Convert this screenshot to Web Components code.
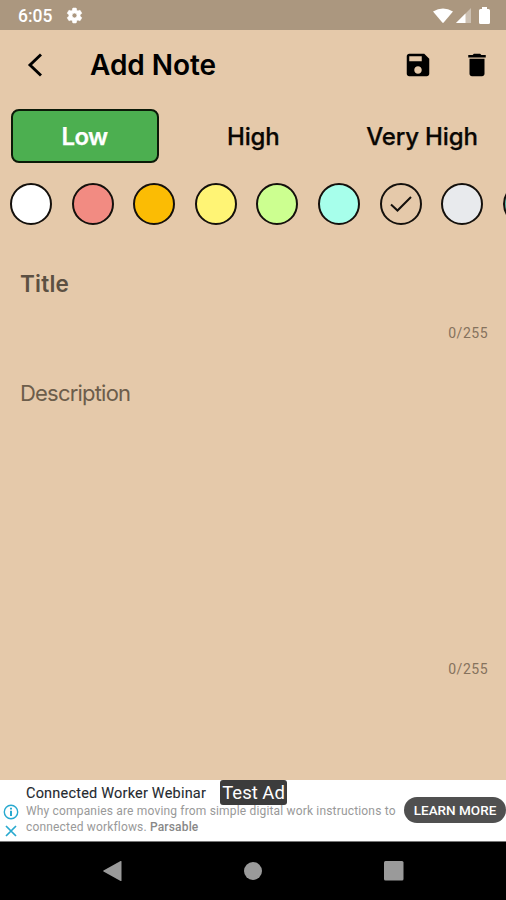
<!DOCTYPE html>
<html lang="en"><head><meta charset="utf-8"><title>Add Note</title>
<style>html,body{margin:0;height:100%;overflow:hidden;background:#e5c9aa}</style></head>
<body><note-app></note-app>
<script>
const define = (name, html) => {
  const t = document.createElement('template');
  t.innerHTML = html;
  customElements.define(name, class extends HTMLElement {
    constructor() { super(); this.attachShadow({mode: 'open'}).append(t.content.cloneNode(true)); }
  });
};

define('status-bar', `<style>
:host{display:flex;height:30px;box-sizing:border-box;background:#ab977f;color:#fff;align-items:center;padding:1px 16px 0 18px;font:500 17.5px/30px Roboto,sans-serif}
.time{width:48px}
svg{display:block;fill:#fff}.gap{flex:1}.wifi{margin-right:3px}.sig{margin-right:8px}
</style><span class="time">6:05</span>
<svg width="17" height="17" viewBox="1 1 22 22"><path fill-rule="evenodd" d="M19.14 12.94c.04-.3.06-.61.06-.94 0-.32-.02-.64-.07-.94l2.03-1.58c.18-.14.23-.41.12-.61l-1.92-3.32c-.12-.22-.37-.29-.59-.22l-2.39.96c-.5-.38-1.03-.7-1.62-.94l-.36-2.54c-.04-.24-.24-.41-.48-.41h-3.84c-.24 0-.43.17-.47.41l-.36 2.54c-.59.24-1.13.57-1.62.94l-2.39-.96c-.22-.08-.47 0-.59.22L2.74 8.87c-.12.21-.08.47.12.61l2.03 1.58c-.05.3-.09.63-.09.94s.02.64.07.94l-2.03 1.58c-.18.14-.23.41-.12.61l1.92 3.32c.12.22.37.29.59.22l2.39-.96c.5.38 1.03.7 1.62.94l.36 2.54c.05.24.24.41.48.41h3.84c.24 0 .44-.17.47-.41l.36-2.54c.59-.24 1.13-.56 1.62-.94l2.39.96c.22.08.47 0 .59-.22l1.92-3.32c.12-.22.07-.47-.12-.61zM12 15.2a3.200 3.200 0 1 1 0-6.400 3.200 3.200 0 0 1 0 6.400z" stroke="#fff" stroke-width=".8"/></svg>
<span class="gap"></span>
<svg class="wifi" width="20" height="16" viewBox="0 0 20 16"><path d="M0 3.600Q10-2.600 20 3.600L10.700 14.500Q10 15.300 9.300 14.500Z"/></svg>
<svg class="sig" width="15" height="15" viewBox="0 0 15 15"><path d="M0 15 15 0V15Z" opacity=".4"/><path d="M0 15 9.500 5.500V15Z"/></svg>
<svg width="11" height="17" viewBox="0 0 11 17"><path d="M3 0h5v2h1.500Q11 2 11 3.500v12Q11 17 9.500 17h-8Q0 17 0 15.500v-12Q0 2 1.500 2H3Z"/></svg>`);

define('app-bar', `<style>
:host{display:flex;height:70px;align-items:center;box-sizing:border-box;padding:0 14px 0 26px;color:#000}
svg{display:block}h1{margin:0 0 0 46px;flex:1;font:600 28px/36px Inter,sans-serif;letter-spacing:-.05px}
.save{margin-right:29px}
</style><svg width="18" height="28" viewBox="0 0 18 28"><path d="M15 3.500 4 14 15 24.500" fill="none" stroke="#000" stroke-width="2.900"/></svg>
<h1><slot></slot></h1>
<svg class="save" width="30" height="30" viewBox="0 0 24 24"><path d="M17 3H5c-1.110 0-2 .9-2 2v14c0 1.100.89 2 2 2h14c1.100 0 2-.9 2-2V7l-4-4zm-5 16c-1.660 0-3-1.340-3-3s1.340-3 3-3 3 1.340 3 3-1.340 3-3 3zm3-10H5V5h10v4z"/></svg>
<svg width="30" height="30" viewBox="0 0 24 24"><path d="M6 19c0 1.100.9 2 2 2h8c1.100 0 2-.9 2-2V7H6v12zM19 4h-3.500l-1-1h-5l-1 1H5v2h14V4z"/></svg>`);

define('priority-tab', `<style>
:host{display:flex;flex:1;margin:0 10px 0 10.500px;height:54px;box-sizing:border-box;align-items:center;justify-content:center;color:#0a0703;font:500 24px/30px Inter,sans-serif;letter-spacing:-.15px;-webkit-text-stroke:.25px;white-space:nowrap;border:2px solid transparent;border-radius:8px;padding-top:1px}
:host([selected]){background:#4caf50;border-color:#0b1a08;color:#fff;font-weight:600;letter-spacing:-.6px}
</style><slot></slot>`);

define('color-dot', `<style>
:host{display:block;flex:none;width:42px;height:42px;box-sizing:border-box;border:2px solid #14100c;border-radius:50%;background:var(--c,transparent)}
svg{display:none}:host([checked]) svg{display:block}
</style><svg width="38" height="38" viewBox="0 0 38 38"><path d="M9 19.500 15.500 25.500 29 12" fill="none" stroke="#14100c" stroke-width="2"/></svg>`);

define('note-field', `<style>
:host{display:flex;flex-direction:column;justify-content:space-between;box-sizing:border-box;padding:0 18.500px 0 20px;font-family:Inter,sans-serif;color:#6c5d4b}
.label{font-size:22px;line-height:30px;letter-spacing:-.8px}
:host([strong]) .label{font-size:22.500px;font-weight:600;color:#5c5042;letter-spacing:.25px}
.count{align-self:flex-end;font:14px/18px Roboto,sans-serif;letter-spacing:.5px;margin-right:-.5px;color:#85725d}
</style><span class="label"><slot></slot></span><span class="count">0/255</span>`);

define('ad-banner', `<style>
:host{display:flex;position:relative;height:62px;box-sizing:border-box;background:#fff;border-bottom:1px solid #777;font-family:Roboto,sans-serif;overflow:hidden}
.marks{width:26px;padding-top:24px;box-sizing:border-box}svg{display:block;margin-left:3px}
.copy{flex:1;white-space:nowrap;padding-top:5px}
.head{font-size:14.500px;line-height:18px;color:#252a30;letter-spacing:.2px;-webkit-text-stroke:.1px}
.line{font-size:12px;line-height:16px;color:#999;letter-spacing:.17px}
b{font-weight:500;color:#888}
.cta{position:absolute;left:404px;top:17px;width:102px;height:26px;border-radius:13px;background:#505050;color:#fff;font:500 13.500px/26px Roboto,sans-serif;text-align:center;white-space:nowrap}
.test{position:absolute;left:220px;top:0;width:67px;height:25px;border-radius:3px;background:#3c3c3c;color:#fff;font:18.500px/27px Roboto,sans-serif;text-align:center;white-space:nowrap}
</style><div class="marks"><svg width="16" height="36" viewBox="0 0 16 36" fill="none" stroke="#28a9cf" stroke-width="1.400"><circle cx="8" cy="8" r="6.700"/><path d="M8 6.800V12M8 3.800V5.500" stroke-width="2"/><path d="M3 22 13 32M13 22 3 32" stroke-width="1.700"/></svg></div>
<div class="copy"><div class="head">Connected Worker Webinar</div><div class="line">Why companies are moving from simple digital work instructions to</div><div class="line">connected workflows. <b>Parsable</b></div></div>
<div class="cta">LEARN MORE</div><div class="test">Test Ad</div>`);

define('nav-bar', `<style>
:host{display:flex;height:58px;background:#000;align-items:center;box-sizing:border-box;padding:0 102px;justify-content:space-between}
svg{display:block;fill:#9a9a9a}
</style><svg width="20" height="22" viewBox="0 0 20 22"><path d="M19.500 1.500V20.500Q19.500 21.400 18.600 20.900L1.500 11.600Q.7 11 1.500 10.400L18.600 1.100Q19.500.6 19.500 1.500Z"/></svg>
<svg width="18" height="18" viewBox="0 0 18 18"><circle cx="9" cy="9" r="9"/></svg>
<svg width="20" height="20" viewBox="0 0 20 20"><rect width="19.500" height="19.500" rx="1.500"/></svg>`);

define('note-app', `<style>
:host{display:flex;flex-direction:column;width:506px;height:900px;background:#e5c9aa;overflow:hidden}
.tabs{display:flex;margin-top:9px}
.dots{display:flex;gap:19.600px;padding:20px 0 0 10px;overflow:hidden}
.title{height:73px;margin-top:44px}.desc{height:300px;margin-top:36px}
ad-banner{margin-top:auto}
</style><status-bar></status-bar><app-bar>Add Note</app-bar>
<div class="tabs"><priority-tab selected>Low</priority-tab><priority-tab>High</priority-tab><priority-tab>Very High</priority-tab></div>
<div class="dots"><color-dot style="--c:#fff"></color-dot><color-dot style="--c:#f28b82"></color-dot><color-dot style="--c:#fbbc04"></color-dot><color-dot style="--c:#fff475"></color-dot><color-dot style="--c:#ccff90"></color-dot><color-dot style="--c:#a7ffeb"></color-dot><color-dot checked></color-dot><color-dot style="--c:#e8eaed"></color-dot><color-dot style="--c:#5db8a8"></color-dot></div>
<note-field class="title" strong>Title</note-field><note-field class="desc">Description</note-field>
<ad-banner></ad-banner><nav-bar></nav-bar>`);
</script></body></html>
